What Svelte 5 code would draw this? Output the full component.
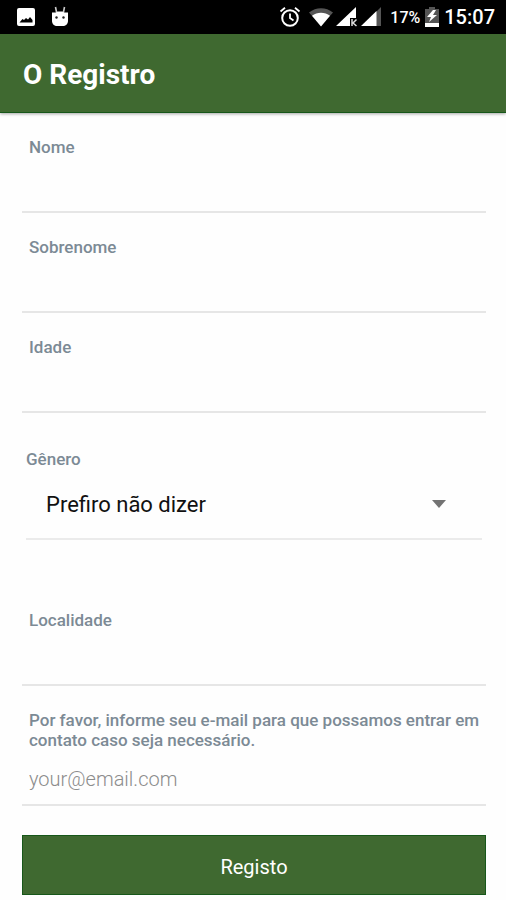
<script>
	let nome = '';
	let sobrenome = '';
	let idade = '';
	let genero = 'Prefiro não dizer';
	let localidade = '';
	let email = '';

	const generos = ['Prefiro não dizer', 'Feminino', 'Masculino', 'Outro'];

	function registrar() {
		console.log('Registro:', { nome, sobrenome, idade, genero, localidade, email });
	}
</script>

<style>
	:global(body) {
		background: #fefefe;
		font-family: Roboto, sans-serif;
	}

	.status-bar {
		display: flex;
		justify-content: space-between;
		align-items: center;
		height: 34px;
		padding: 0 11px 0 16px;
		background: #000;
		color: #fff;
	}

	.status-group {
		display: flex;
		align-items: center;
	}

	.notifications {
		gap: 14px;
	}

	.system {
		gap: 3px;
	}

	.status-group svg {
		display: block;
	}

	.alarm {
		margin-right: 5px;
	}

	.battery-level {
		margin-left: 5px;
		font-size: 16px;
		font-weight: 500;
	}

	.battery {
		margin-left: 2px;
	}

	.clock {
		margin-left: 2px;
		font-size: 20px;
		line-height: 24px;
		font-weight: 500;
	}

	.app-bar {
		display: flex;
		align-items: center;
		height: 79px;
		padding: 4px 23px 0;
		background: #3f6930;
		border-bottom: 1px solid #17571a;
		box-sizing: border-box;
		box-shadow: 0 1px 3px rgba(0, 0, 0, 0.35);
	}

	h1 {
		margin: 0;
		color: #fff;
		font-size: 28px;
		line-height: 32px;
		font-weight: 700;
	}

	form {
		padding: 0 20px 4px 22px;
	}

	.field {
		padding-top: 24px;
		border-bottom: 2px solid #e6e6e6;
	}

	label {
		display: block;
		padding-left: 7px;
		color: #7c8a95;
		font-size: 17px;
		line-height: 20px;
		font-weight: 500;
	}

	input,
	select {
		display: block;
		width: 100%;
		box-sizing: border-box;
		border: none;
		border-radius: 0;
		outline: none;
		background: transparent;
		color: #111;
		font-family: inherit;
	}

	input {
		height: 54px;
		padding: 4px 7px 0;
		font-size: 20px;
	}

	input::placeholder {
		color: #8c8c8c;
		font-weight: 300;
		opacity: 1;
	}

	.picker {
		margin: 36px 4px 46px;
		border-bottom: 2px solid #ebebeb;
	}

	.picker label {
		padding: 0;
	}

	.select-box {
		display: grid;
		align-items: center;
	}

	.select-box > * {
		grid-area: 1 / 1;
	}

	select {
		height: 69px;
		padding: 1px 60px 0 20px;
		appearance: none;
		font-size: 22px;
	}

	.arrow {
		justify-self: end;
		margin-right: 36px;
		pointer-events: none;
	}

	.submit-btn {
		display: block;
		width: 100%;
		height: 60px;
		margin-top: 29px;
		padding: 4px 0 0;
		border: 1px solid #17571a;
		background: #3f6930;
		color: #fff;
		font-family: inherit;
		font-size: 20px;
		cursor: pointer;
	}
</style>

<div class="status-bar">
	<div class="status-group notifications">
		<svg width="20" height="20" viewBox="0 0 20 20">
			<path fill="#fff" fill-rule="evenodd" d="M3 1h14a2 2 0 0 1 2 2v14a2 2 0 0 1-2 2H3a2 2 0 0 1-2-2V3a2 2 0 0 1 2-2zM3.500 15.500h13v-2.500l-2.500-3-2 2.500-2-1.500-2 2-1.500-1z" />
		</svg>
		<svg width="20" height="22" viewBox="0 0 20 22">
			<path stroke="#ccc" stroke-width="1.600" d="M5.500 1l1 5M14.500 1l-1 5" />
			<path fill="#fff" d="M2 6.500h3.500l2-1h5l2 1H18V15c0 3-2.500 5-5 5H7c-2.500 0-5-2-5-5z" />
			<circle cx="6.500" cy="11.500" r="1.200" fill="#222" />
			<circle cx="13.500" cy="11.500" r="1.200" fill="#222" />
		</svg>
	</div>
	<div class="status-group system">
		<svg class="alarm" width="22" height="22" viewBox="0 0 22 22" fill="none" stroke="#fff">
			<circle cx="11" cy="12" r="7.800" stroke-width="2" />
			<path stroke-width="1.800" d="M11 7.500V12l3.500 2.500M1.500 5.500L6 1.700M20.500 5.500L16 1.700" />
		</svg>
		<svg width="24" height="22" viewBox="0 0 24 22">
			<path fill="#555" d="M0 6.500C7 .7 17 .7 24 6.500L12 20z" />
			<path fill="#fff" d="M3 9.800c5-4.200 13-4.200 18 0L12 20.500z" />
		</svg>
		<svg width="22" height="22" viewBox="0 0 22 22">
			<path fill="#fff" d="M0 20L20 1v11h-6v8z" />
			<path fill="none" stroke="#ddd" stroke-width="1.500" d="M16 13v7M20.500 13.500L17 17l3.500 3" />
		</svg>
		<svg width="21" height="22" viewBox="0 0 21 22">
			<path fill="#555" d="M15 6l5-5v19h-5z" />
			<path fill="#fff" d="M0 20L15.500 5v15z" />
		</svg>
		<span class="battery-level">17%</span>
		<svg class="battery" width="14" height="22" viewBox="0 0 14 22">
			<path fill="#555" d="M4 1h6v2h4v15H0V3h4z" />
			<path fill="#fff" d="M0 17h14v4H0zM8 4l-6 7h4l-2 5 8-7H8l3-5z" />
		</svg>
		<span class="clock">15:07</span>
	</div>
</div>

<header class="app-bar">
	<h1>O Registro</h1>
</header>

<form on:submit|preventDefault={registrar}>
	<div class="field">
		<label for="nome">Nome</label>
		<input id="nome" type="text" bind:value={nome}>
	</div>
	<div class="field">
		<label for="sobrenome">Sobrenome</label>
		<input id="sobrenome" type="text" bind:value={sobrenome}>
	</div>
	<div class="field">
		<label for="idade">Idade</label>
		<input id="idade" type="text" inputmode="numeric" bind:value={idade}>
	</div>

	<div class="picker">
		<label for="genero">Gênero</label>
		<div class="select-box">
			<select id="genero" bind:value={genero}>
				{#each generos as opcao}
					<option value={opcao}>{opcao}</option>
				{/each}
			</select>
			<svg class="arrow" width="14" height="8" viewBox="0 0 14 8">
				<path fill="#737373" d="M0 0h14L7 8z" />
			</svg>
		</div>
	</div>

	<div class="field">
		<label for="localidade">Localidade</label>
		<input id="localidade" type="text" bind:value={localidade}>
	</div>
	<div class="field">
		<label for="email">Por favor, informe seu e-mail para que possamos entrar em contato caso seja necessário.</label>
		<input id="email" type="email" placeholder="your@email.com" bind:value={email}>
	</div>

	<button type="submit" class="submit-btn">Registo</button>
</form>
